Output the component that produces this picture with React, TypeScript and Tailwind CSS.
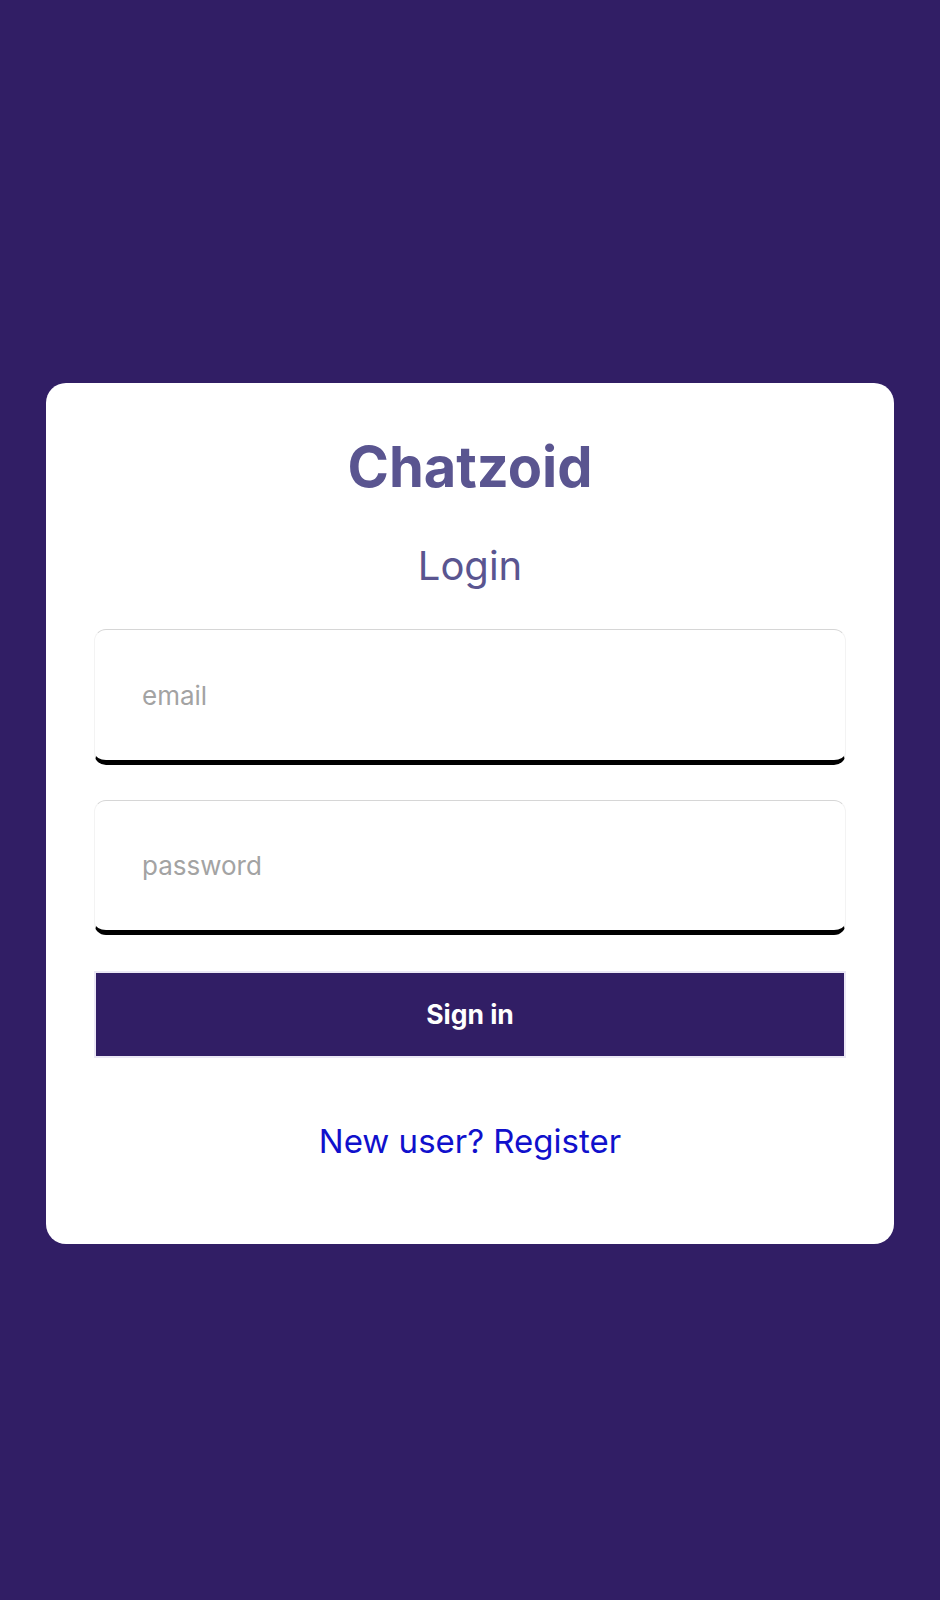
export default function App() {
  return (
    <div
      className="min-h-[1600px] w-full bg-[#311e65] pt-[383px]"
      style={{ fontFamily: "Inter, 'Noto Sans', sans-serif" }}
    >
      <div className="mx-[46px] flex flex-col items-center rounded-[20px] bg-white px-[48px] pt-[50px] pb-[83px]">
        <h1 className="text-[56px] font-bold leading-[68px] text-[#5a5590]">Chatzoid</h1>
        <h2 className="mt-[40px] text-[40px] leading-[49px] text-[#5a5590]">Login</h2>

        <form className="mt-[39px] flex w-full flex-col" onSubmit={(e) => e.preventDefault()}>
          <input
            type="email"
            placeholder="email"
            className="h-[136px] w-full rounded-xl border border-x-[#f3f3f3] border-t-[#d6d6d6] border-b-[5px] border-b-black bg-white px-[47px] text-[26px] text-gray-700 outline-none placeholder:text-[#a3a3a3]"
          />
          <input
            type="password"
            placeholder="password"
            className="mt-[35px] h-[135px] w-full rounded-xl border border-x-[#f3f3f3] border-t-[#d6d6d6] border-b-[5px] border-b-black bg-white px-[47px] text-[26px] text-gray-700 outline-none placeholder:text-[#a3a3a3]"
          />
          <button
            type="submit"
            className="mt-[36px] h-[87px] w-full border-2 border-[#ebe8f5] bg-[#311e65] text-[26.5px] font-bold text-white"
          >
            Sign in
          </button>
        </form>

        <a href="#" className="mt-[63px] text-[33px] leading-[40px] text-[#1010cc]">
          New user? Register
        </a>
      </div>
    </div>
  )
}
